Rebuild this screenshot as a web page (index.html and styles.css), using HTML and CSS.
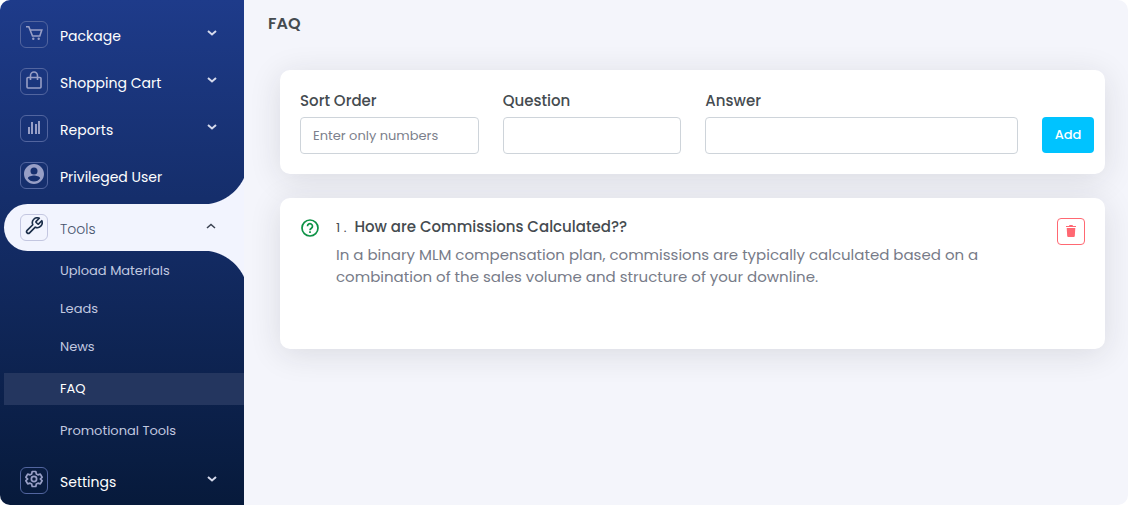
FILE: index.html
```html
<!DOCTYPE html>
<html lang="en">
<head>
  <meta charset="UTF-8">
  <meta name="viewport" content="width=device-width, initial-scale=1.0">
  <title>FAQ</title>
  <link rel="stylesheet" href="styles.css">
</head>
<body>
  <div class="app">
    <nav class="sidebar">
      <ul class="menu">
        <li>
          <button type="button" class="menu-item">
            <span class="menu-icon">
              <svg width="18" height="18" viewBox="0 0 18 18" fill="none" stroke="currentColor" stroke-width="1.6"><path d="M1 2.700h2.800l3.700 9.300h7.300l2-6H5.200"/><circle cx="8.300" cy="14.800" r="1.200" fill="currentColor" stroke="none"/><circle cx="13.700" cy="14.800" r="1.200" fill="currentColor" stroke="none"/></svg>
            </span>
            <span class="menu-text">Package</span>
            <svg class="chevron" width="10" height="8" viewBox="0 0 10 8"><path d="M1 2l4 3.500 4-3.500"/></svg>
          </button>
        </li>
        <li>
          <button type="button" class="menu-item">
            <span class="menu-icon">
              <svg width="18" height="18" viewBox="0 0 18 18" fill="none" stroke="currentColor" stroke-width="1.600"><rect x="2" y="6.500" width="14" height="10.500" rx="1"/><path d="M5.500 9V4.500a3.500 3.500 0 0 1 7 0V9"/></svg>
            </span>
            <span class="menu-text">Shopping Cart</span>
            <svg class="chevron" width="10" height="8" viewBox="0 0 10 8"><path d="M1 2l4 3.500 4-3.500"/></svg>
          </button>
        </li>
        <li>
          <button type="button" class="menu-item">
            <span class="menu-icon">
              <svg width="18" height="18" viewBox="0 0 18 18" fill="currentColor"><path d="M3 9h2v7H3zM6 4h2v12H6zM10 6h2v10h-2zM13 3h2v13h-2z"/></svg>
            </span>
            <span class="menu-text">Reports</span>
            <svg class="chevron" width="10" height="8" viewBox="0 0 10 8"><path d="M1 2l4 3.500 4-3.500"/></svg>
          </button>
        </li>
        <li>
          <a href="#" class="menu-item">
            <span class="menu-icon">
              <svg width="20" height="20" viewBox="2 3 20 20" overflow="visible" fill="currentColor"><path d="M12 2C6.480 2 2 6.480 2 12s4.480 10 10 10 10-4.480 10-10S17.520 2 12 2zm0 3.500a3.500 3.500 0 1 1 0 7 3.500 3.500 0 0 1 0-7zM12 19.500c-2.600 0-4.900-1.300-6.200-3.300.4-1.700 4-2.700 6.200-2.700s5.800 1 6.200 2.700c-1.300 2-3.600 3.300-6.200 3.300z"/></svg>
            </span>
            <span class="menu-text">Privileged User</span>
          </a>
        </li>
        <li>
          <button type="button" class="menu-item open">
            <span class="menu-icon">
              <svg width="18" height="18" viewBox="1 1 22 22" fill="none" stroke="currentColor" stroke-width="2" stroke-linecap="round" stroke-linejoin="round"><path d="M14.700 6.300a1 1 0 0 0 0 1.400l1.600 1.600a1 1 0 0 0 1.400 0l3.770-3.770a6 6 0 0 1-7.940 7.940l-6.910 6.910a2.120 2.120 0 0 1-3-3l6.910-6.910a6 6 0 0 1 7.940-7.940l-3.760 3.760z"/></svg>
            </span>
            <span class="menu-text">Tools</span>
            <svg class="chevron" width="10" height="8" viewBox="0 0 10 8"><path d="M1 6l4-3.500L9 6"/></svg>
          </button>
          <ul class="submenu">
            <li><a href="#">Upload Materials</a></li>
            <li><a href="#">Leads</a></li>
            <li><a href="#">News</a></li>
            <li class="active"><a href="#">FAQ</a></li>
            <li><a href="#">Promotional Tools</a></li>
          </ul>
        </li>
        <li>
          <button type="button" class="menu-item">
            <span class="menu-icon">
              <svg width="18" height="18" viewBox="0 0 24 24" fill="none" stroke="currentColor" stroke-width="2.300" stroke-linejoin="round"><path d="M9.600 2h4.800l.7 3.200 2.200 1.300 3.100-1 2.400 4.200-2.400 2.300 2.400 2.300-2.400 4.200-3.100-1-2.200 1.300-.7 3.200H9.600l-.7-3.200-2.200-1.300-3.100 1-2.400-4.200L3.600 12 1.200 9.700l2.400-4.200 3.100 1 2.200-1.300z"/><circle cx="12" cy="12" r="3.500"/></svg>
            </span>
            <span class="menu-text">Settings</span>
            <svg class="chevron" width="10" height="8" viewBox="0 0 10 8"><path d="M1 2l4 3.500 4-3.500"/></svg>
          </button>
        </li>
      </ul>
    </nav>

    <main class="content">
      <h1>FAQ</h1>

      <form class="card faq-form">
        <div class="field">
          <label for="sort">Sort Order</label>
          <input type="text" id="sort" placeholder="Enter only numbers">
        </div>
        <div class="field">
          <label for="question">Question</label>
          <input type="text" id="question">
        </div>
        <div class="field">
          <label for="answer">Answer</label>
          <input type="text" id="answer">
        </div>
        <button type="button" class="btn-add">Add</button>
      </form>

      <section class="card faq-item">
        <svg class="faq-icon" width="18" height="18" viewBox="0 0 18 18" fill="none" stroke="currentColor" stroke-width="1.700"><circle cx="9" cy="9" r="8"/><path d="M6.500 7.200a2.500 2.500 0 1 1 3.900 2c-.9.600-1.400 1-1.400 2"/><path d="M9 12.300v1.700"/></svg>
        <div class="faq-body">
          <h2><span class="faq-number">1 .</span>How are Commissions Calculated??</h2>
          <p>In a binary MLM compensation plan, commissions are typically calculated based on a combination of the sales volume and structure of your downline.</p>
        </div>
        <button type="button" class="btn-delete" aria-label="Delete">
          <svg width="10" height="12" viewBox="0 0 10 12" fill="currentColor"><path d="M0 1h3l.5-1h3L7 1h3v1H0zM.7 3h8.600L8.800 11q-.1 1-1 1H2.200q-.9 0-1-1z"/></svg>
        </button>
      </section>
    </main>
  </div>
</body>
</html>
```
FILE: styles.css
```css
* {
  box-sizing: border-box;
}
body {
  margin: 0;
  background-color: #fff;
  font-family: 'Poppins', 'Inter', 'Open Sans', sans-serif;
  color: #454b50;
}
button,
input {
  font-family: inherit;
}
ul {
  list-style: none;
  margin: 0;
  padding: 0;
}
.app {
  display: flex;
  min-height: 100vh;
  border-radius: 10px;
  overflow: hidden;
  background-color: #f4f5fb;
}

/* sidebar */
.sidebar {
  flex: 0 0 244px;
  padding-top: 11px;
  background: linear-gradient(#1e3b8a, #071a3b);
}
.menu-item {
  display: flex;
  align-items: center;
  width: 100%;
  height: 47px;
  padding: 0 27px 0 20px;
  border: none;
  background: none;
  color: #fff;
  font-size: 14px;
  font-weight: 400;
  text-align: left;
  text-decoration: none;
  cursor: pointer;
}
.menu-icon {
  display: flex;
  justify-content: center;
  width: 28px;
  height: 27px;
  padding-top: 2px;
  margin-right: 12px;
  border: 1px solid #52659f;
  border-radius: 6px;
  color: #989fc6;
}
.menu-text {
  flex: 1;
  padding-top: 3px;
}
.chevron {
  margin-bottom: 3px;
  fill: none;
  stroke: #d5daec;
  stroke-width: 2;
}
.menu-item.open {
  position: relative;
  width: auto;
  min-width: calc(100% - 4px);
  margin: 5px 0 0 4px;
  padding: 0 28px 0 16px;
  border-radius: 24px 0 0 24px;
  background-color: #f2f4fe;
  color: #46536c;
  font-weight: 300;
}
.menu-item.open::before,
.menu-item.open::after {
  content: "";
  position: absolute;
  right: 0;
  width: 42px;
  height: 46px;
}
.menu-item.open::before {
  bottom: 100%;
  background: radial-gradient(circle at 0 0, transparent 46px, #f2f4fe 47px);
}
.menu-item.open::after {
  top: 100%;
  background: radial-gradient(circle at 0 100%, transparent 46px, #f2f4fe 47px);
}
.open .menu-icon {
  border-color: #c3c6e0;
  color: #1c2f4a;
}
.open .chevron {
  stroke: #3a4150;
  stroke-width: 1.5;
}
.submenu {
  display: flex;
  flex-direction: column;
  gap: 6px;
  margin: 4px 0 10px 4px;
}
.submenu a {
  display: block;
  padding-left: 56px;
  color: #c2c9e0;
  font-size: 13px;
  line-height: 32px;
  text-decoration: none;
}
.submenu .active {
  margin: 4px 0;
  background-color: #24365f;
}
.submenu .active a {
  color: #fff;
}

/* page content */
.content {
  flex: 1;
  padding: 12px 23px 24px 24px;
}
.content h1 {
  margin: 0 0 34px;
  font-size: 16px;
  line-height: 24px;
  font-weight: 600;
}
.card {
  margin: 0 0 24px 12px;
  border-radius: 10px;
  background-color: #fff;
  box-shadow: 0 5px 32px rgba(34, 36, 44, 0.12);
}
.faq-form {
  display: grid;
  grid-template-columns: 4fr 4fr 7fr 52px;
  gap: 24px;
  align-items: end;
  padding: 20px 11px 20px 20px;
}
.field label {
  display: block;
  margin-bottom: 5px;
  font-size: 15px;
  line-height: 22px;
  font-weight: 500;
}
.field input {
  display: block;
  width: 100%;
  height: 37px;
  padding: 0 12px;
  border: 1px solid #ced4da;
  border-radius: 4px;
  font-size: 13px;
  color: #454b50;
}
.field input::placeholder {
  color: #7c7f8c;
}
.btn-add {
  height: 36px;
  margin-bottom: 1px;
  padding: 0;
  border: none;
  border-radius: 4px;
  background-color: #00c3ff;
  color: #fff;
  font-size: 13px;
  font-weight: 500;
}
.faq-item {
  display: flex;
  align-items: flex-start;
  min-height: 151px;
  padding: 18px 20px 20px;
}
.faq-icon {
  flex: none;
  margin: 3px 17px 0 1px;
  color: #0d9245;
}
.faq-body {
  flex: 1;
}
.faq-body h2 {
  margin: 0 0 5px;
  font-size: 15px;
  line-height: 22px;
  font-weight: 500;
}
.faq-number {
  margin-right: 8px;
  font-size: 13px;
  font-weight: 400;
}
.faq-body p {
  margin: 0;
  max-width: 660px;
  font-size: 15px;
  line-height: 22px;
  color: #777b88;
}
.btn-delete {
  display: flex;
  align-items: center;
  justify-content: center;
  width: 28px;
  height: 27px;
  margin-top: 2px;
  padding: 0 0 1px;
  border: 1px solid #ff6872;
  border-radius: 4px;
  background: none;
  color: #ff6872;
}
```
